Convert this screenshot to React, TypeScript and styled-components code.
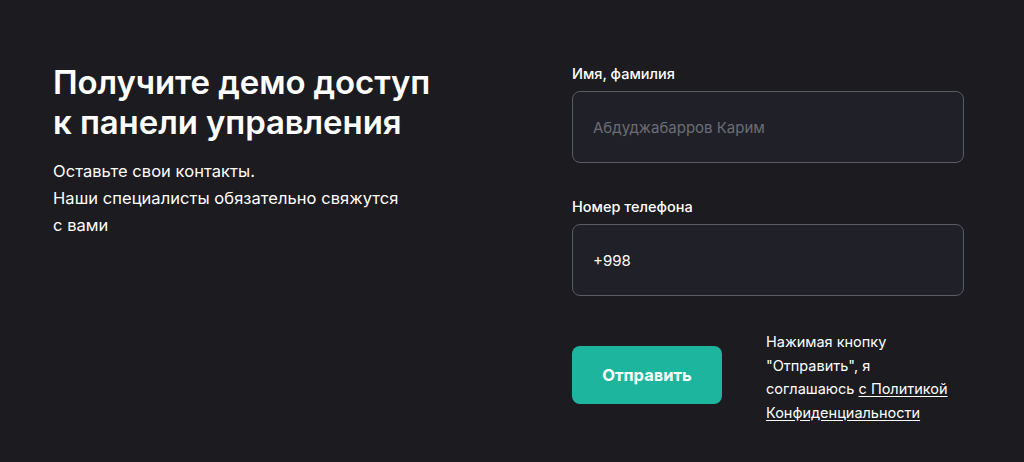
import React from "react";
import styled, { createGlobalStyle } from "styled-components";

const Global = createGlobalStyle`
  html, body { margin: 0; padding: 0; background: #1b1b20; }
  body { font-family: Inter, "Noto Sans", sans-serif; color: #ffffff; }
  * { box-sizing: border-box; }
`;

const Page = styled.div`
  width: 1024px;
  height: 462px;
  background: #1b1b20;
  display: flex;
  padding: 62px 60px 0 53px;
`;

const Intro = styled.section`
  width: 519px;
  display: flex;
  flex-direction: column;
`;

const Title = styled.h1`
  margin: 0;
  font-size: 33px;
  line-height: 40px;
  font-weight: 600;
  letter-spacing: -0.1px;
`;

const Lead = styled.p`
  margin: 16px 0 0;
  font-size: 16.5px;
  line-height: 27px;
  font-weight: 400;
  letter-spacing: 0.05px;
`;

const Form = styled.form`
  width: 392px;
  display: flex;
  flex-direction: column;
  padding-top: 2px;
`;

const Field = styled.label<{ $last?: boolean }>`
  display: flex;
  flex-direction: column;
  gap: 7px;
  margin-bottom: ${(p) => (p.$last ? "0" : "34px")};
`;

const Label = styled.span`
  font-size: 14.5px;
  line-height: 20px;
  font-weight: 500;
`;

const Input = styled.input`
  height: 72px;
  width: 100%;
  border: 1.5px solid #5b5c63;
  border-radius: 8px;
  background: #202128;
  color: #ffffff;
  font-family: inherit;
  font-size: 15px;
  padding: 0 20px;
  outline: none;
  &::placeholder { color: #6c6d74; }
`;

const Actions = styled.div`
  display: flex;
  align-items: flex-start;
  gap: 44px;
  margin-top: 34px;
`;

const Submit = styled.button`
  width: 150px;
  height: 58px;
  margin-top: 16px;
  border: none;
  border-radius: 8px;
  background: #1eb59e;
  color: #ffffff;
  font-family: inherit;
  font-size: 16.5px;
  font-weight: 700;
  cursor: pointer;
`;

const Note = styled.p`
  margin: 0;
  font-size: 14.5px;
  line-height: 23.5px;
  font-weight: 400;
  width: 192px;
`;

const NoteLink = styled.a`
  color: #ffffff;
  text-decoration: underline;
  text-underline-offset: 2px;
`;

export default function App() {
  return (
    <>
      <Global />
      <Page>
        <Intro>
          <Title>
            Получите демо доступ
            <br />к панели управления
          </Title>
          <Lead>
            Оставьте свои контакты.
            <br />
            Наши специалисты обязательно свяжутся
            <br />с вами
          </Lead>
        </Intro>
        <Form onSubmit={(e) => e.preventDefault()}>
          <Field>
            <Label>Имя, фамилия</Label>
            <Input placeholder="Абдуджабарров Карим" />
          </Field>
          <Field $last>
            <Label>Номер телефона</Label>
            <Input defaultValue="+998" />
          </Field>
          <Actions>
            <Submit type="submit">Отправить</Submit>
            <Note>
              Нажимая кнопку "Отправить", я соглашаюсь{" "}
              <NoteLink href="#">с Политикой Конфиденциальности</NoteLink>
            </Note>
          </Actions>
        </Form>
      </Page>
    </>
  );
}
